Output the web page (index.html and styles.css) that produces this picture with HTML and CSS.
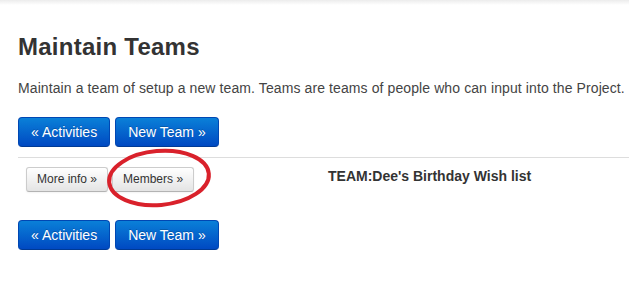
FILE: index.html
```html
<!DOCTYPE html>
<html lang="en">
<head>
  <meta charset="UTF-8">
  <meta name="viewport" content="width=device-width, initial-scale=1.0">
  <title>Maintain Teams</title>
  <link rel="stylesheet" href="styles.css">
</head>
<body>
  <div class="top-shade"></div>

  <div class="page">
    <h1>Maintain Teams</h1>
    <p class="lead">Maintain a team of setup a new team. Teams are teams of people who can input into the Project.</p>

    <div class="actions">
      <a class="btn btn-primary" href="#activities">&laquo; Activities</a>
      <a class="btn btn-primary" href="#new">New Team &raquo;</a>
    </div>

    <div class="team-row">
      <div class="team-links">
        <a class="btn btn-small" href="#info">More info &raquo;</a>
        <a class="btn btn-small" href="#members">Members &raquo;</a>
      </div>
      <div class="team-name">TEAM:Dee's Birthday Wish list</div>

      <!-- hand drawn marker round the Members button -->
      <svg class="marker" width="120" height="70" viewBox="0 0 120 70">
        <ellipse cx="60" cy="33" rx="50" ry="27" transform="rotate(-5 60 33)" fill="none" stroke="#d9212b" stroke-width="4"/>
      </svg>
    </div>

    <div class="actions bottom">
      <a class="btn btn-primary" href="#activities">&laquo; Activities</a>
      <a class="btn btn-primary" href="#new">New Team &raquo;</a>
    </div>
  </div>
</body>
</html>
```

FILE: styles.css
```css
body {
  margin: 0;
  font-family: "Liberation Sans", Arial, sans-serif;
  color: #333;
  background: #fff;
}
.top-shade {
  height: 5px;
  background: linear-gradient(to bottom, #ececec, #fff);
}
.page {
  padding-left: 18px;
}
h1 {
  margin: 24px 0 0;
  font-size: 24px;
  line-height: 36px;
  letter-spacing: 0.25px;
  color: #333;
}
.lead {
  margin: 13px 0 0;
  font-size: 14px;
  line-height: 20px;
  letter-spacing: 0.1px;
  white-space: nowrap;
  color: #444;
}
/* Buttons */
.actions {
  display: flex;
  gap: 5px;
  margin-top: 19px;
}
.actions.bottom {
  margin-top: 20px;
}
.btn {
  display: inline-block;
  text-decoration: none;
  border-radius: 4px;
  white-space: nowrap;
}
.btn-primary {
  padding: 4px 12px;
  font-size: 14px;
  line-height: 20px;
  color: #fff;
  background: linear-gradient(to bottom, #0a80d8, #0049c2);
  border: 1px solid #0047b3;
  border-bottom-color: #003a94;
  text-shadow: 0 -1px 0 rgba(0,0,0,0.2);
}
.btn-small {
  padding: 3px 10px;
  font-size: 12px;
  line-height: 17px;
  color: #333;
  background: linear-gradient(to bottom, #fff, #e4e4e4);
  border: 1px solid #ccc;
  border-bottom-color: #b3b3b3;
  border-radius: 3px;
  box-shadow: 0 1px 2px rgba(0,0,0,0.05);
}
/* Team list row */
.team-row {
  position: relative;
  display: flex;
  margin-top: 10px;
  padding: 9px 8px 8px;
  border-top: 1px solid #ddd;
}
.team-links {
  display: flex;
  gap: 4px;
  width: 302px;
}
.team-name {
  font-size: 14px;
  font-weight: bold;
  line-height: 18px;
  color: #333;
}
.marker {
  position: absolute;
  left: 81px;
  top: -13px;
}
```
